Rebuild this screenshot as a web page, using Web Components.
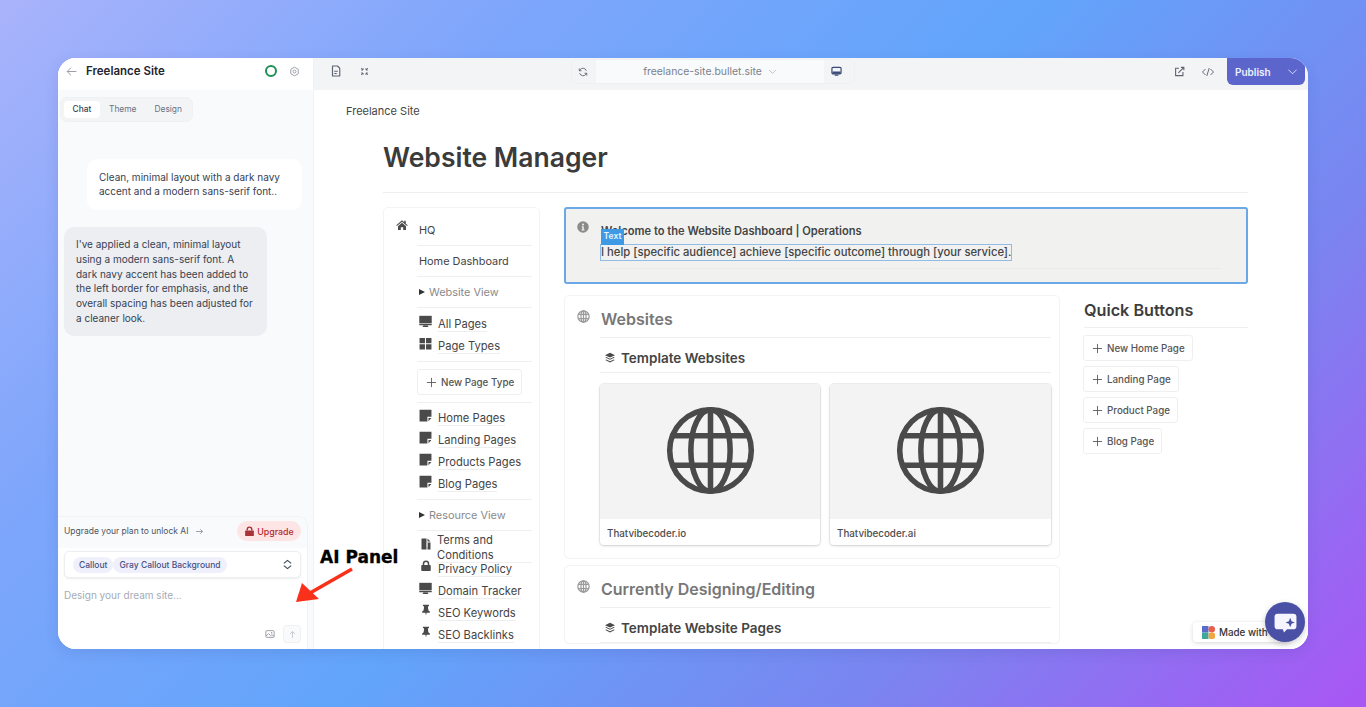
<!DOCTYPE html>
<html>
<head>
<meta charset="utf-8">
<title>Freelance Site</title>
<style>
  html, body { margin: 0; height: 707px; overflow: hidden; }
  body {
    box-sizing: border-box;
    padding: 58px;
    font-family: Inter, "Liberation Sans", sans-serif;
    background: linear-gradient(135deg, #a9b3fb 0%, #7ea6fb 25%, #62a5fb 50%, #7a85f0 75%, #a956f4 100%);
  }
</style>
</head>
<body>
<app-window></app-window>

<script>
/* icon paths, 24x24 box */
const ICONS = {
  back: '<path d="M21 12H4M11 5l-7 7 7 7" fill="none" stroke="currentColor" stroke-width="1.6"/>',
  gear: '<circle cx="12" cy="12" r="3.2" fill="none" stroke="currentColor" stroke-width="2"/><path d="M12 2.500l8.200 4.750v9.500L12 21.500l-8.200-4.750v-9.500z" fill="none" stroke="currentColor" stroke-width="2" stroke-linejoin="round"/>',
  doc: '<path d="M5 2h10l4.500 4.500V22H5z" fill="none" stroke="currentColor" stroke-width="2.300" stroke-linejoin="round"/><path d="M8.500 12.500h7M8.500 17h5" stroke="currentColor" stroke-width="2"/>',
  expand: '<path d="M3 3l5 5M8 3v5H3M21 3l-5 5M16 3v5h5M3 21l5-5M8 21v-5H3M21 21l-5-5M16 21v-5h5" fill="none" stroke="currentColor" stroke-width="2.600"/>',
  refresh: '<path d="M20 9a8.500 8.500 0 0 0-15-2.500L3 9M4 15a8.500 8.500 0 0 0 15 2.500l2-2.500" fill="none" stroke="currentColor" stroke-width="2.200"/><path d="M3 3.500V9h5.500M21 20.500V15h-5.500" fill="none" stroke="currentColor" stroke-width="2.200"/>',
  chevron: '<path d="M3 8l9 9 9-9" fill="none" stroke="currentColor" stroke-width="1.800"/>',
  monitor: '<rect x="2" y="3" width="20" height="14" rx="2.500" fill="none" stroke="currentColor" stroke-width="2.600"/><rect x="3" y="12" width="18" height="5" fill="currentColor"/><path d="M8 21.500h8v-3H8z" fill="currentColor"/>',
  desktop: '<path d="M0.500 1.500h23v14h-23z" fill="currentColor"/><path d="M0.500 16.800h23v2h-23zM8 19.500h8l1.500 2.500h-11z" fill="currentColor"/>',
  external: '<path d="M11 5H3.500v16h16v-8" fill="none" stroke="currentColor" stroke-width="2.400"/><path d="M9.500 15l11-11M15 3h6.500v6.500" fill="none" stroke="currentColor" stroke-width="2.400"/>',
  code: '<path d="M7 6l-6 6 6 6M17 6l6 6-6 6M14.500 4l-5 16" fill="none" stroke="currentColor" stroke-width="1.900"/>',
  arrow: '<path d="M3 12h17M14 6l6 6-6 6" fill="none" stroke="currentColor" stroke-width="1.800"/>',
  lock: '<path d="M7 10V7.500a5 5 0 0 1 10 0V10" fill="none" stroke="currentColor" stroke-width="3"/><rect x="2.500" y="10" width="19" height="12" rx="1.500" fill="currentColor"/>',
  updown: '<path d="M4 9.500L12 3l8 6.500M4 14.500L12 21l8-6.500" fill="none" stroke="currentColor" stroke-width="2.400"/>',
  image: '<rect x="2" y="4" width="20" height="16" rx="2" fill="none" stroke="currentColor" stroke-width="2"/><path d="M2.500 17l6-6 5 5 3-2.500 5 4" fill="none" stroke="currentColor" stroke-width="2"/><circle cx="16" cy="9" r="1.600" fill="currentColor"/>',
  up: '<path d="M12 21V4M5 11l7-7 7 7" fill="none" stroke="currentColor" stroke-width="2"/>',
  home: '<path d="M12 2.500L0.500 12.500l1.400 1.600L12 5.400l10.100 8.700 1.400-1.600-4-3.500V3.500h-3v2.800z" fill="currentColor"/><path d="M4 14.500L12 7.600l8 6.900v7.500h-5.600v-5.600H9.600V22H4z" fill="currentColor"/>',
  grid: '<path d="M1 2h10v9.500H1zM13 2h10v9.500H13zM1 13.500h10V23H1zM13 13.500h10V23H13z" fill="currentColor"/>',
  note: '<path d="M1 1.500h22v13h-7.500V23H1z" fill="currentColor"/><path d="M17.500 16.500H23L17.500 22.500z" fill="currentColor"/>',
  terms: '<path d="M3 1h10v22H3z" fill="currentColor"/><path d="M15 1l6 6h-6zM15 9h6v14h-6z" fill="currentColor"/><path d="M13 12h3M13 16h3" stroke="#fff" stroke-width="1.400"/>',
  pin: '<path d="M6 1.500h12v2.400l-2.200 1.200.9 7.400 3 2.600v2.400H13.200L12 23l-1.200-5.500H4.300v-2.400l3-2.600.9-7.400L6 3.900z" fill="currentColor"/>',
  info: '<circle cx="12" cy="12" r="11.500" fill="currentColor"/><circle cx="12" cy="6.800" r="2" fill="#f1f1ef"/><path d="M9.500 10.500h4v6.500h1.500v2H9v-2h1.500v-4.500h-1z" fill="#f1f1ef"/>',
  globe: '<circle cx="12" cy="12" r="10.400" fill="none" stroke="currentColor" stroke-width="2.300"/><ellipse cx="12" cy="12" rx="4.700" ry="10.400" fill="none" stroke="currentColor" stroke-width="2.300"/><path d="M12 1.500v21M2.500 8h19M2.500 16h19" stroke="currentColor" stroke-width="2.300"/>',
  earth: '<circle cx="12" cy="12" r="11" fill="none" stroke="currentColor" stroke-width="1.500"/><ellipse cx="12" cy="12" rx="5.300" ry="11" fill="none" stroke="currentColor" stroke-width="1.500"/><path d="M12 1v22M2 8h20M2 16h20" stroke="currentColor" stroke-width="1.500"/>',
  layers: '<path d="M12 1.500l10 4.800-10 4.800-10-4.800z" fill="currentColor"/><path d="M2.500 11l2-1 7.500 3.600L19.500 10l2 1L12 15.600zM2.500 16l2-1 7.500 3.600L19.500 15l2 1L12 20.800z" fill="currentColor"/>',
  plus: '<path d="M12 2v20M2 12h20" stroke="currentColor" stroke-width="1.900"/>'
};

class UiIcon extends HTMLElement {
  connectedCallback() {
    const size = this.getAttribute("size") || 12;
    const name = this.getAttribute("name");
    this.attachShadow({ mode: "open" }).innerHTML = `
      <style>
        :host { display: inline-flex; flex: none; width: ${size}px; height: ${size}px; }
        svg { width: 100%; height: 100%; display: block; }
      </style>
      <svg viewBox="0 0 24 24">${ICONS[name]}</svg>`;
  }
}

class ChatPanel extends HTMLElement {
  connectedCallback() {
    this.attachShadow({ mode: "open" }).innerHTML = `
      <style>
        :host { display: flex; flex-direction: column; width: 256px; flex: none; background: #f9fafb; border-right: 1px solid #f1f2f4; box-sizing: border-box; font-size: 10px; color: #374151; }
        .head { height: 32px; box-sizing: border-box; background: #fff; display: flex; align-items: center; padding: 0 13px 6px 7px; flex: none; }
        .head .back { color: #8a8f98; }
        .head b { margin-left: 8px; font-size: 11.500px; font-weight: 600; color: #1f2430; flex: 1; }
        .ring { width: 12px; height: 12px; box-sizing: border-box; border: 2px solid #1f8f55; border-radius: 50%; margin-right: 12px; }
        .head .gear { color: #9499a2; }
        .tabs { margin: 7px 0 0 2px; width: 133px; height: 25px; box-sizing: border-box; background: #f3f4f6; border: 1px solid #f0f1f3; border-radius: 7px; display: flex; align-items: center; padding-left: 3px; font-size: 8.400px; color: #6b7280; }
        .tabs span { height: 17px; line-height: 17px; }
        .tabs .on { width: 36px; text-align: center; background: #fff; color: #374151; border-radius: 4px; font-weight: 500; margin-right: 9px; }
        .tabs .th { margin-right: 18px; }
        .msgs { flex: 1; padding-top: 37px; }
        .user { margin-left: 29px; width: 215px; height: 51px; box-sizing: border-box; background: #fff; border-radius: 10px; padding: 11px 12px 0; line-height: 14.400px; }
        .bot { margin: 17px 0 0 6px; width: 203px; height: 109px; box-sizing: border-box; background: #eceef1; border-radius: 10px; padding: 10px 11px 0 12px; line-height: 14.800px; }
        .box { width: 250px; height: 133px; flex: none; box-sizing: border-box; border: 1px solid #f1f2f4; border-left: 0; border-bottom: 0; border-radius: 0 10px 0 0; display: flex; flex-direction: column; background: #fff; }
        .up { height: 31px; flex: none; box-sizing: border-box; background: #f9fafb; display: flex; align-items: center; padding: 0 6px 3px; font-size: 8.500px; color: #4b5563; border-radius: 0 10px 0 0; }
        .up ui-icon { margin-left: 6px; color: #6b7280; }
        .pill { margin-left: auto; width: 64px; height: 20px; background: #fde5e5; color: #b3282d; border-radius: 10px; display: flex; align-items: center; justify-content: center; gap: 2px; font-weight: 500; font-size: 8.800px; }
        .pill ui-icon { margin: 0; color: #a93237; }
        .sel { margin: 3px 6px 0; height: 27px; flex: none; box-sizing: border-box; background: #fff; border: 1px solid #eceef1; border-radius: 5px; box-shadow: 0 1px 2px rgba(0,0,0,.08); display: flex; align-items: center; padding: 0 7px 0 8px; font-size: 8.500px; font-weight: 500; color: #475086; }
        .sel span { background: #eff0fb; height: 16px; line-height: 16px; padding: 0 6px; border-radius: 8px; }
        .sel ui-icon { margin-left: auto; color: #374151; }
        .ph { margin: 11px 6px 0; color: #a6abb5; font-size: 10px; }
        .foot { margin-top: auto; height: 24px; display: flex; justify-content: flex-end; align-items: flex-start; padding-right: 6px; gap: 8px; }
        .foot .img { color: #8a8f98; margin-top: 4px; }
        .send { width: 18px; height: 18px; box-sizing: border-box; background: #f9fafb; border: 1px solid #f0f1f3; border-radius: 4px; display: flex; align-items: center; justify-content: center; color: #b8bcc4; }
      </style>
      <div class="head">
        <ui-icon class="back" name="back" size="13"></ui-icon>
        <b>Freelance Site</b>
        <div class="ring"></div>
        <ui-icon class="gear" name="gear" size="11"></ui-icon>
      </div>
      <div class="tabs"><span class="on">Chat</span><span class="th">Theme</span><span>Design</span></div>
      <div class="msgs">
        <div class="user">Clean, minimal layout with a dark navy accent and a modern sans-serif font..</div>
        <div class="bot">I've applied a clean, minimal layout using a modern sans-serif font. A dark navy accent has been added to the left border for emphasis, and the overall spacing has been adjusted for a cleaner look.</div>
      </div>
      <div class="box">
        <div class="up">Upgrade your plan to unlock AI <ui-icon name="arrow" size="9"></ui-icon>
          <div class="pill"><ui-icon name="lock" size="11"></ui-icon>Upgrade</div>
        </div>
        <div class="sel"><span>Callout</span><span>Gray Callout Background</span><ui-icon name="updown" size="11"></ui-icon></div>
        <div class="ph">Design your dream site...</div>
        <div class="foot"><ui-icon class="img" name="image" size="10"></ui-icon><div class="send"><ui-icon name="up" size="9"></ui-icon></div></div>
      </div>`;
  }
}

class TopBar extends HTMLElement {
  connectedCallback() {
    this.attachShadow({ mode: "open" }).innerHTML = `
      <style>
        :host { display: flex; height: 32px; flex: none; background: #f3f4f6; align-items: flex-start; color: #5f6570; position: relative; }
        .left { display: flex; align-items: center; gap: 18px; padding: 7px 0 0 16px; width: 257px; box-sizing: border-box; }
        .mid { display: flex; align-items: center; width: 284px; height: 25px; margin-top: 1px; box-sizing: border-box; border: 1px solid #eff0f2; border-radius: 5px; padding-right: 5px; }
        .mid .r { width: 24px; display: flex; justify-content: center; padding-right: 2px; box-sizing: border-box; }
        .url { width: 228px; height: 100%; background: #f9fafb; font-size: 10.400px; color: #7b818b; display: flex; align-items: center; justify-content: center; gap: 6px; }
        .url ui-icon { color: #a5a9b1; }
        .mid .m { flex: 1; display: flex; justify-content: center; color: #3b4a78; }
        .right { margin-left: auto; display: flex; padding-top: 8px; }
        .right .ext { margin-right: 17px; }
        .right .code { margin-right: 13px; }
        .pub { width: 78px; height: 27px; margin: -8px 3px 0 0; box-sizing: border-box; background: #5b65cc; color: #f0f1ff; border-radius: 0 0 6px 6px; display: flex; align-items: center; justify-content: space-between; padding: 0 7px 0 8px; font-size: 10px; font-weight: 600; }
      </style>
      <div class="left"><ui-icon name="doc" size="12"></ui-icon><ui-icon name="expand" size="9"></ui-icon></div>
      <div class="mid">
        <div class="r"><ui-icon name="refresh" size="10"></ui-icon></div>
        <div class="url">freelance-site.bullet.site <ui-icon name="chevron" size="9"></ui-icon></div>
        <div class="m"><ui-icon name="monitor" size="11"></ui-icon></div>
      </div>
      <div class="right">
        <ui-icon class="ext" name="external" size="11"></ui-icon>
        <ui-icon class="code" name="code" size="12"></ui-icon>
        <div class="pub">Publish <ui-icon name="chevron" size="11"></ui-icon></div>
      </div>`;
  }
}

class NavLink extends HTMLElement {
  connectedCallback() {
    const icon = this.getAttribute("icon");
    const small = icon === "lock" || icon === "pin";
    this.attachShadow({ mode: "open" }).innerHTML = `
      <style>
        :host { display: flex; height: 22px; align-items: flex-start; font-size: 11.200px; line-height: 14px; color: #444; padding-left: 2px; }
        ui-icon { color: #4a4a4a; margin: 5px 6px 0 ${small ? 1 : 0}px; }
        span { margin-top: 7px; border-bottom: 1px solid #eee; }
      </style>
      <ui-icon name="${icon}" size="${small ? 12 : 13}"></ui-icon><span><slot></slot></span>`;
  }
}

class AddButton extends HTMLElement {
  connectedCallback() {
    this.attachShadow({ mode: "open" }).innerHTML = `
      <style>
        :host { display: inline-flex; align-items: center; height: 26px; box-sizing: border-box; padding: 0 7px 0 8px; gap: 4px; border: 1px solid #efefef; border-radius: 3px; background: #fff; font-size: 9.800px; font-weight: 500; color: #555; white-space: nowrap; }
        ui-icon { color: #555; }
      </style>
      <ui-icon name="plus" size="11"></ui-icon><slot></slot>`;
  }
}

class SiteNav extends HTMLElement {
  connectedCallback() {
    this.attachShadow({ mode: "open" }).innerHTML = `
      <style>
        :host { display: flex; width: 157px; flex: none; box-sizing: border-box; border: 1px solid #f3f3f3; border-radius: 5px; padding: 7px 7px 0 12px; height: 460px; color: #444; }
        .home { color: #4a4a4a; margin: 4px 9px 0 0; }
        .col { flex: 1; font-size: 10.900px; }
        .t { height: 30px; line-height: 30px; border-bottom: 1px solid #efefef; padding-left: 2px; }
        .v { color: #8a8a8a; height: 30px; border-bottom: 1px solid #efefef; display: flex; align-items: center; gap: 4px; padding-left: 2px; }
        .v i { width: 0; height: 0; border-left: 6px solid #333; border-top: 3.500px solid transparent; border-bottom: 3.500px solid transparent; }
        .g { border-bottom: 1px solid #efefef; }
        .g.a { padding: 2px 0 7px; }
        .g.b { padding: 1px 0 7px; }
        .btn { display: flex; padding: 7px 0; border-bottom: 1px solid #efefef; }
        .terms { display: flex; line-height: 14.500px; font-size: 11.200px; padding-top: 2px; height: 24px; box-sizing: border-box; }
        .terms ui-icon { margin: 5px 5px 0 3px; color: #4a4a4a; }
        .terms span { flex: 1; border-bottom: 1px solid #efefef; height: 29px; }
      </style>
      <ui-icon class="home" name="home" size="12"></ui-icon>
      <div class="col">
        <div class="t">HQ</div>
        <div class="t">Home Dashboard</div>
        <div class="v"><i></i>Website View</div>
        <div class="g a"><nav-link icon="desktop">All Pages</nav-link><nav-link icon="grid">Page Types</nav-link></div>
        <div class="btn"><add-button>New Page Type</add-button></div>
        <div class="g b"><nav-link icon="note">Home Pages</nav-link><nav-link icon="note">Landing Pages</nav-link><nav-link icon="note">Products Pages</nav-link><nav-link icon="note">Blog Pages</nav-link></div>
        <div class="v"><i></i>Resource View</div>
        <div class="terms"><ui-icon name="terms" size="12"></ui-icon><span>Terms and Conditions</span></div>
        <nav-link icon="lock">Privacy Policy</nav-link><nav-link icon="desktop">Domain Tracker</nav-link><nav-link icon="pin">SEO Keywords</nav-link><nav-link icon="pin">SEO Backlinks</nav-link>
      </div>`;
  }
}

class CalloutBox extends HTMLElement {
  connectedCallback() {
    this.attachShadow({ mode: "open" }).innerHTML = `
      <style>
        :host { display: flex; height: 77px; box-sizing: border-box; background: #f1f1ef; border: 2px solid #6aa9e6; border-radius: 3px; padding: 13px 0 0 11px; color: #444; font-size: 11.250px; position: relative; }
        ui-icon { color: #8b8b8b; margin: -1px 12px 0 0; }
        .c { flex: 1; margin-right: 25px; }
        .w { height: 15px; line-height: 15px; margin-top: 2px; font-weight: 600; font-size: 11.130px; }
        .p { display: inline-block; margin-top: 6px; height: 15px; line-height: 14px; box-sizing: border-box; outline: 1px solid #8fbde8; font-weight: 500; }
        .line { margin-top: 8px; border-top: 1px solid #ebebe9; }
        .tag { position: absolute; left: 35px; top: 20px; width: 23px; height: 16px; background: #3f9ae6; color: #eaf4ff; font-size: 8.500px; font-weight: 600; text-align: center; line-height: 15px; }
      </style>
      <ui-icon name="info" size="12"></ui-icon>
      <div class="c">
        <div class="w">Welcome to the Website Dashboard | Operations</div>
        <div class="p">I help [specific audience] achieve [specific outcome] through [your service].</div>
        <div class="line"></div>
      </div>
      <div class="tag">Text</div>`;
  }
}

class SiteCard extends HTMLElement {
  connectedCallback() {
    this.attachShadow({ mode: "open" }).innerHTML = `
      <style>
        :host { display: block; box-sizing: border-box; height: 161px; background: #fff; border-radius: 4px; box-shadow: 0 0 0 1px rgba(0,0,0,.06), 0 1px 3px rgba(0,0,0,.14); overflow: hidden; }
        .img { height: 135px; box-sizing: border-box; padding-bottom: 2px; background: #f3f3f3; display: flex; align-items: center; justify-content: center; color: #4a4a4a; }
        .l { padding-left: 7px; height: 26px; line-height: 29px; font-size: 9.800px; font-weight: 500; color: #4c4c4c; }
      </style>
      <div class="img"><ui-icon name="earth" size="89"></ui-icon></div>
      <div class="l"><slot></slot></div>`;
  }
}

class SectionBox extends HTMLElement {
  connectedCallback() {
    const title = this.getAttribute("title");
    const sub = this.getAttribute("sub");
    this.attachShadow({ mode: "open" }).innerHTML = `
      <style>
        :host { display: flex; box-sizing: border-box; border: 1px solid #f3f3f3; border-radius: 5px; padding: 13px 8px 0 12px; flex: none; }
        .i { color: #9a9a9a; margin: 1px 10px 0 0; }
        .c { flex: 1; min-width: 0; }
        h2 { margin: 0; padding-left: 1px; font-size: 16px; font-weight: 600; color: #777; height: 28px; line-height: 20px; border-bottom: 1px solid #efefef; }
        .s { display: flex; align-items: center; height: 34px; border-bottom: 1px solid #efefef; font-size: 13.500px; font-weight: 600; color: #444; padding-left: 4px; }
        .s span { position: relative; top: 2.500px; display: flex; align-items: center; gap: 5px; }
        .s ui-icon { color: #4a4a4a; }
        ::slotted(*) { margin-top: 11px; }
      </style>
      <ui-icon class="i" name="globe" size="13"></ui-icon>
      <div class="c">
        <h2>${title}</h2>
        <div class="s"><span><ui-icon name="layers" size="12"></ui-icon>${sub}</span></div>
        <slot></slot>
      </div>`;
  }
}

class QuickButtons extends HTMLElement {
  connectedCallback() {
    this.attachShadow({ mode: "open" }).innerHTML = `
      <style>
        :host { display: block; width: 164px; flex: none; margin-top: 6px; }
        h3 { margin: 0 0 7px; font-size: 16.200px; font-weight: 600; color: #3d3d3d; height: 26px; line-height: 18px; border-bottom: 1px solid #efefef; }
        .b { display: flex; flex-direction: column; align-items: flex-start; gap: 5px; margin-left: -1px; }
      </style>
      <h3>Quick Buttons</h3>
      <div class="b">
        <add-button>New Home Page</add-button>
        <add-button>Landing Page</add-button>
        <add-button>Product Page</add-button>
        <add-button>Blog Page</add-button>
      </div>`;
  }
}

class PageContent extends HTMLElement {
  connectedCallback() {
    this.attachShadow({ mode: "open" }).innerHTML = `
      <style>
        :host { display: block; flex: 1; min-height: 0; background: #fff; overflow: hidden; padding: 0 60px 0 69px; color: #3d3d3d; }
        .crumb { margin: 14px 0 0 -37px; font-size: 11px; line-height: 15px; color: #444; }
        h1 { margin: 20px 0 0; font-size: 26.500px; line-height: 36px; height: 53px; font-weight: 600; color: #3b3b3b; border-bottom: 1px solid #eee; }
        .cols { display: flex; gap: 24px; margin-top: 14px; }
        .main { flex: 1; min-width: 0; display: flex; flex-direction: column; gap: 11px; }
        .lower { display: flex; gap: 24px; }
        .left { width: 496px; flex: none; display: flex; flex-direction: column; gap: 6px; }
        .cards { display: grid; grid-template-columns: 220px 221px; gap: 10px; height: 174px; }
      </style>
      <div class="crumb">Freelance Site</div>
      <h1>Website Manager</h1>
      <div class="cols">
        <site-nav></site-nav>
        <div class="main">
          <callout-box></callout-box>
          <div class="lower">
            <div class="left">
              <section-box title="Websites" sub="Template Websites">
                <div class="cards"><site-card>Thatvibecoder.io</site-card><site-card>Thatvibecoder.ai</site-card></div>
              </section-box>
              <section-box title="Currently Designing/Editing" sub="Template Website Pages"></section-box>
            </div>
            <quick-buttons></quick-buttons>
          </div>
        </div>
      </div>`;
  }
}

class MadeWith extends HTMLElement {
  connectedCallback() {
    this.attachShadow({ mode: "open" }).innerHTML = `
      <style>
        :host { position: absolute; right: 18px; bottom: 7px; display: flex; align-items: center; width: 97px; height: 20px; box-sizing: border-box; padding-left: 9px; gap: 4px; background: #fff; border-radius: 4px; box-shadow: 0 1px 4px rgba(0,0,0,.16); font-size: 9.800px; font-weight: 500; color: #333; }
        svg { width: 13px; height: 13px; flex: none; }
      </style>
      <svg viewBox="0 0 12 12"><rect width="6" height="6" fill="#5b6bc9"/><rect x="6" width="6" height="6" rx="3" fill="#e8604c"/><rect y="6" width="6" height="6" fill="#41a79a"/><rect x="6" y="6" width="6" height="6" rx="2" fill="#f2a541"/></svg>
      Made with`;
  }
}

class ChatBubble extends HTMLElement {
  connectedCallback() {
    this.attachShadow({ mode: "open" }).innerHTML = `
      <style>
        :host { position: absolute; right: 3px; bottom: 7px; width: 40px; height: 40px; border-radius: 50%; background: #4a50a6; box-shadow: 0 2px 6px rgba(0,0,0,.2); display: flex; align-items: center; justify-content: center; }
        svg { width: 25px; height: 25px; }
      </style>
      <svg viewBox="0 0 24 24"><path d="M4.500 3.500h15a3 3 0 0 1 3 3v9a3 3 0 0 1-3 3h-6l-3 3-1-3h-5a3 3 0 0 1-3-3v-9a3 3 0 0 1 3-3z" fill="#f4f5ff"/><path d="M16.500 7.500l1.300 3.200 3.200 1.300-3.200 1.300-1.300 3.200-1.300-3.200-3.200-1.300 3.200-1.300z" fill="#4a50a6"/></svg>`;
  }
}

class AppWindow extends HTMLElement {
  connectedCallback() {
    this.attachShadow({ mode: "open" }).innerHTML = `
      <style>
        :host { display: flex; width: 1250px; height: 591px; background: #fff; border-radius: 18px; overflow: hidden; position: relative; box-shadow: 0 4px 14px rgba(40,50,120,.12); }
        .right { flex: 1; min-width: 0; display: flex; flex-direction: column; }
        .label { position: absolute; left: 262px; top: 489px; font: bold 17px "DejaVu Sans", sans-serif; -webkit-text-stroke: .3px #000; color: #000; white-space: nowrap; }
        .arrow { position: absolute; left: 236px; top: 508px; width: 62px; height: 40px; }
      </style>
      <chat-panel></chat-panel>
      <div class="right">
        <top-bar></top-bar>
        <page-content></page-content>
      </div>
      <div class="label">AI Panel</div>
      <svg class="arrow" viewBox="0 0 62 40"><path d="M58 3L16 27" stroke="#f9301a" stroke-width="3.600"/><path d="M2 36l6-19 17 16z" fill="#f9301a"/></svg>
      <made-with></made-with>
      <chat-bubble></chat-bubble>`;
  }
}

customElements.define("ui-icon", UiIcon);
customElements.define("nav-link", NavLink);
customElements.define("add-button", AddButton);
customElements.define("chat-panel", ChatPanel);
customElements.define("top-bar", TopBar);
customElements.define("site-nav", SiteNav);
customElements.define("callout-box", CalloutBox);
customElements.define("site-card", SiteCard);
customElements.define("section-box", SectionBox);
customElements.define("quick-buttons", QuickButtons);
customElements.define("page-content", PageContent);
customElements.define("made-with", MadeWith);
customElements.define("chat-bubble", ChatBubble);
customElements.define("app-window", AppWindow);
</script>
</body>
</html>
